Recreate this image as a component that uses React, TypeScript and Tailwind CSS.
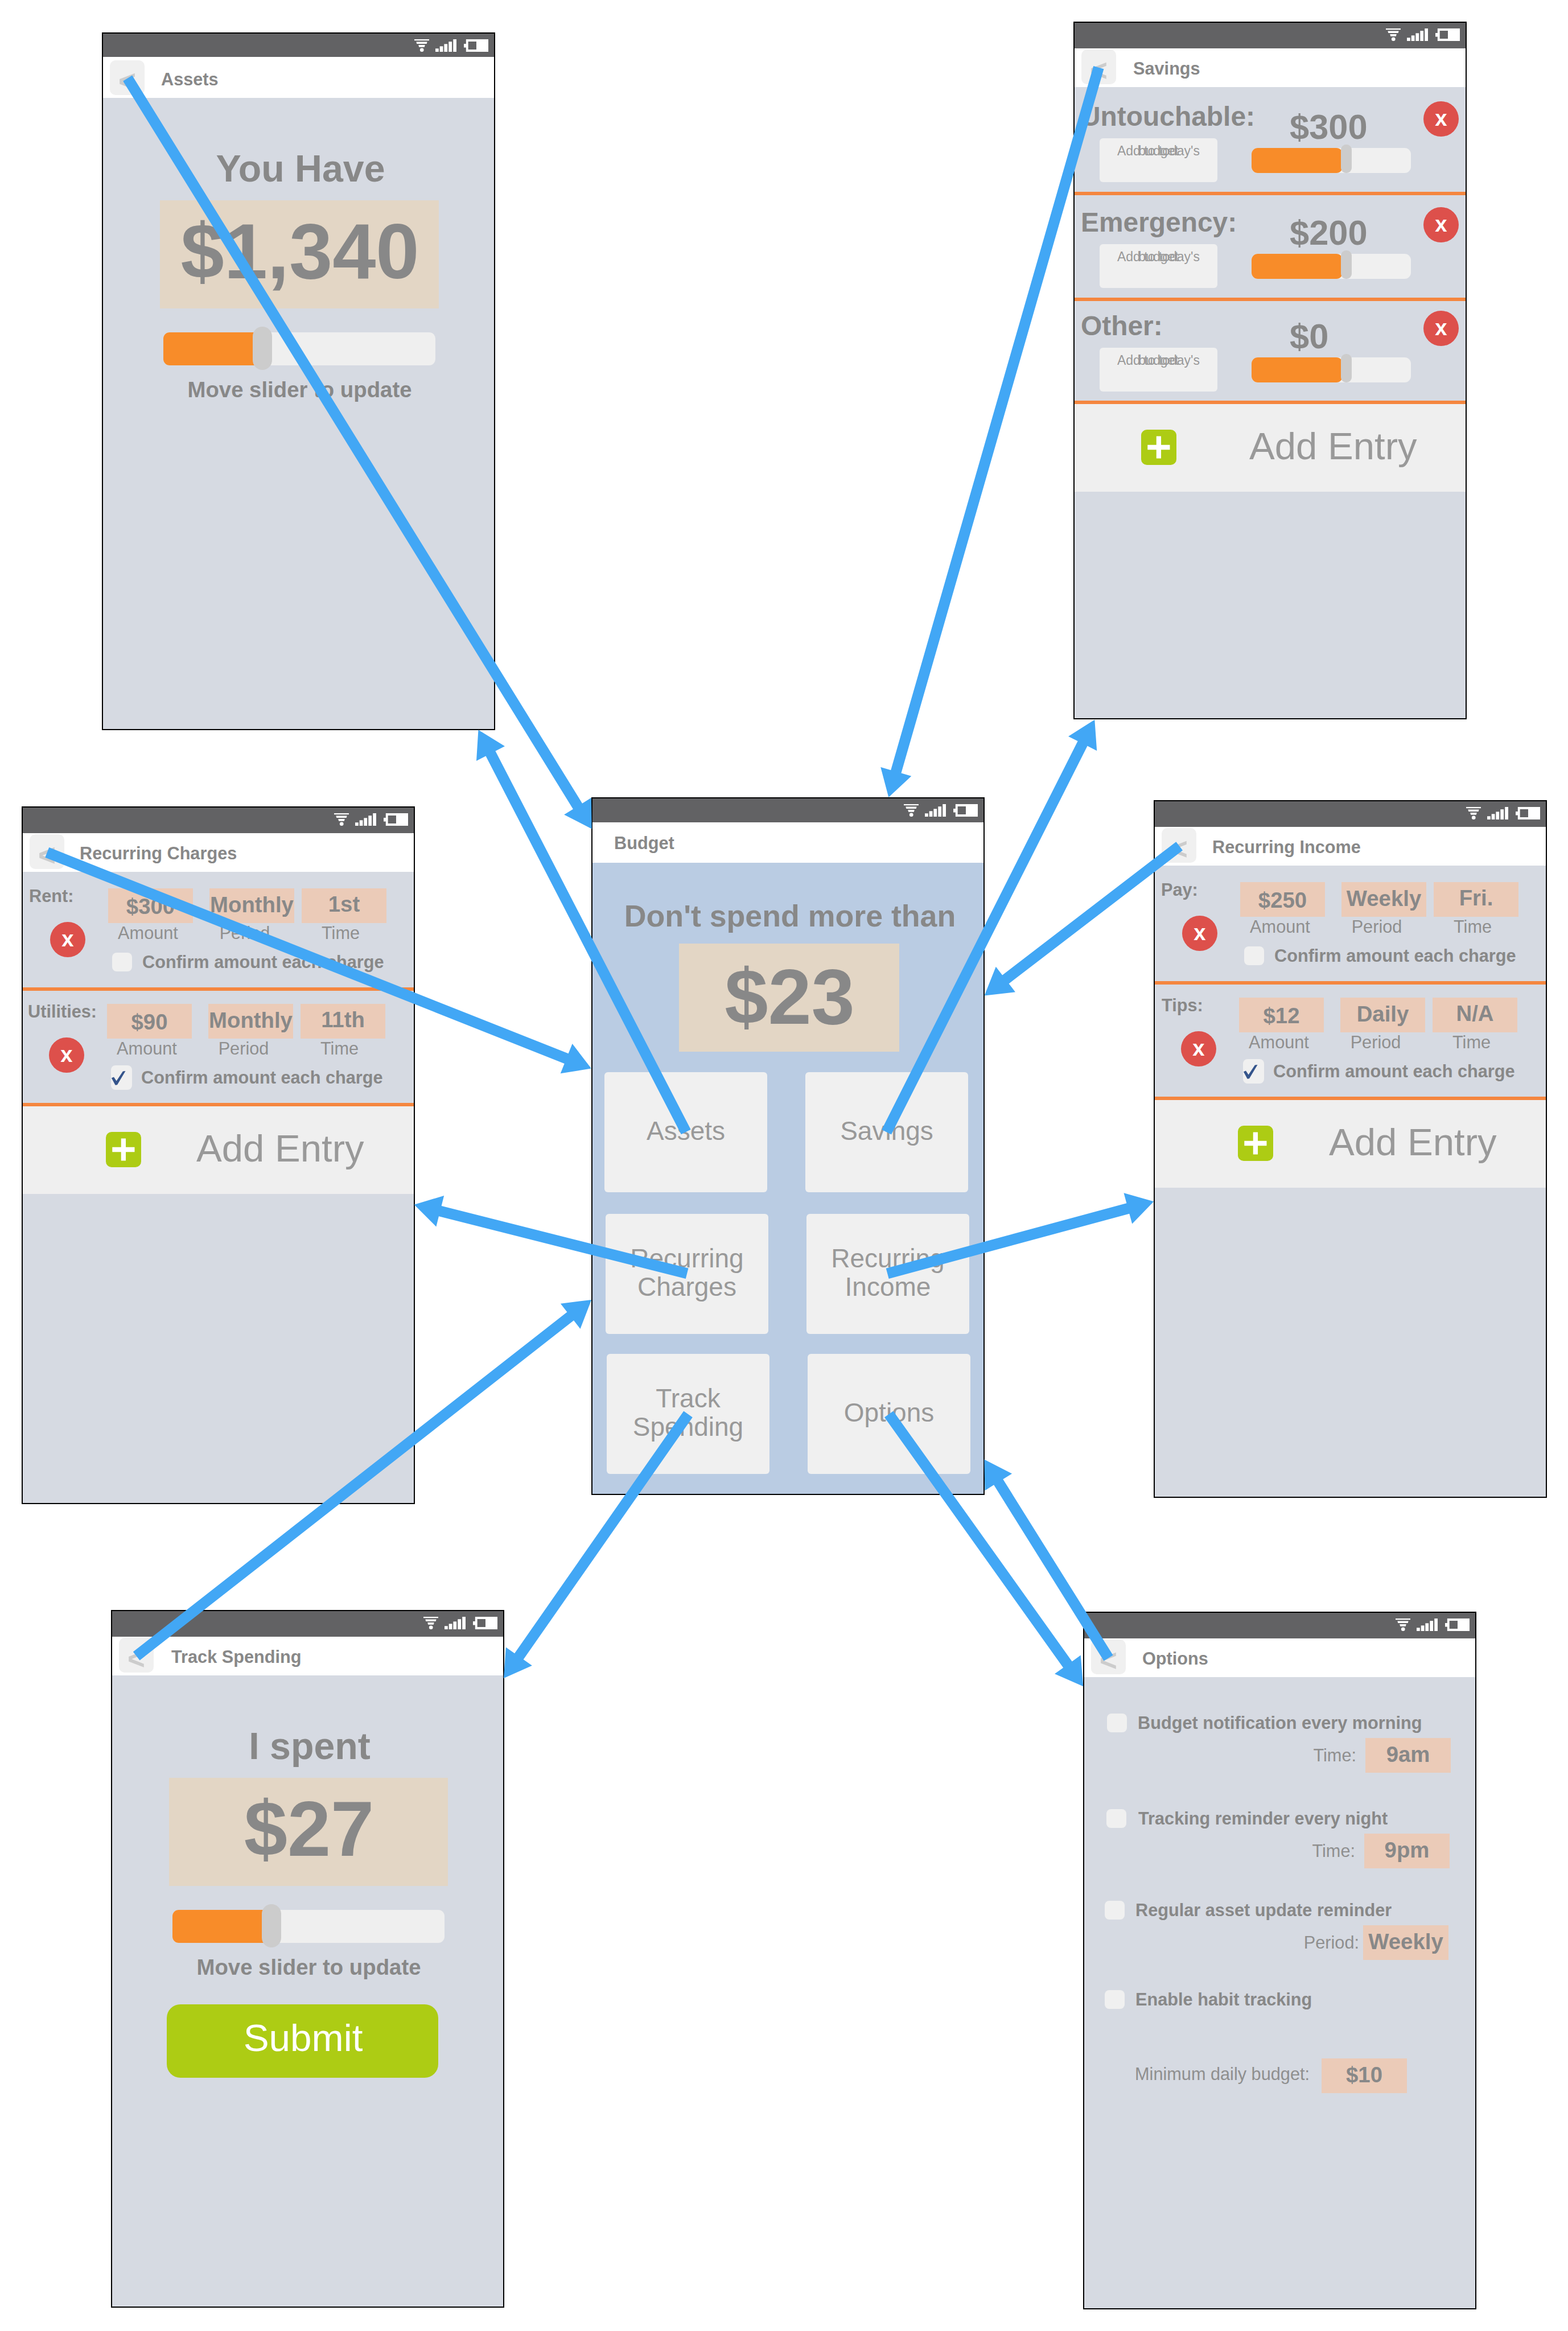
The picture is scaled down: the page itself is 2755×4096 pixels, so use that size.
import type { ReactNode } from 'react'

type Point = [number, number]

const links: { from: Point; to: Point }[] = [
  { from: [345.4, 211.8], to: [1602, 2244.3] },
  { from: [1857.1, 3064.6], to: [1295, 1976] },
  { from: [2974.3, 182.9], to: [2405.7, 2158.7] },
  { from: [2400, 3065], to: [2963.5, 1948.5] },
  { from: [127.5, 2308], to: [1600.7, 2892.8] },
  { from: [1860, 3448], to: [1121.3, 3261.3] },
  { from: [3192.9, 2290.7], to: [2665, 2695.7] },
  { from: [2402.5, 3448], to: [3123.6, 3252.9] },
  { from: [369.3, 4483.7], to: [1601.3, 3519] },
  { from: [1862.9, 3828.7], to: [1363.6, 4543.9] },
  { from: [3000.8, 4489], to: [2664.6, 3951.3] },
  { from: [2406.4, 3828.7], to: [2932.5, 4565.6] },
]

const SHAFT = 14.6
const HEAD_HALF = 43.3
const HEAD_LENGTH = 72.4

function arrowPoints([x1, y1]: Point, [x2, y2]: Point) {
  const length = Math.hypot(x2 - x1, y2 - y1)
  const ux = (x2 - x1) / length
  const uy = (y2 - y1) / length
  const bx = x2 - ux * HEAD_LENGTH
  const by = y2 - uy * HEAD_LENGTH
  const at = (x: number, y: number, d: number) => `${(x - uy * d).toFixed(1)},${(y + ux * d).toFixed(1)}`
  return [
    at(x1, y1, SHAFT),
    at(bx, by, SHAFT),
    at(bx, by, HEAD_HALF),
    `${x2},${y2}`,
    at(bx, by, -HEAD_HALF),
    at(bx, by, -SHAFT),
    at(x1, y1, -SHAFT),
  ].join(' ')
}

function Links() {
  return (
    <svg className="pointer-events-none absolute inset-0 h-full w-full" viewBox="0 0 4245 6311" preserveAspectRatio="none">
      {links.map((l) => (
        <polygon key={l.to.join()} points={arrowPoints(l.from, l.to)} fill="#42a7f5" />
      ))}
    </svg>
  )
}

function StatusIcons() {
  return (
    <>
      <svg className="mr-[11px] h-[22px] w-[26px]" viewBox="0 0 54 50" preserveAspectRatio="none" fill="#fff">
        <rect x="0" y="0" width="54" height="5" />
        <path d="M7 10H47L45 18H9Z" />
        <path d="M15 23H39L37 31H17Z" />
        <ellipse cx="27.5" cy="42.5" rx="7" ry="7.5" />
      </svg>
      <svg className="mr-[13px] h-[22px] w-[37px]" viewBox="0 0 77 50" preserveAspectRatio="none" fill="#fff">
        <rect x="0" y="37" width="12" height="13" />
        <rect x="16" y="28" width="12" height="22" />
        <rect x="32" y="19" width="12" height="31" />
        <rect x="48.5" y="9.5" width="12" height="40.5" />
        <rect x="65" y="0" width="12" height="50" />
      </svg>
      <svg className="h-[22px] w-[43px]" viewBox="0 0 90 50" preserveAspectRatio="none" fill="#fff">
        <path fillRule="evenodd" d="M8 0H90V50H8V33H0V18H8ZM16 9V41H46V9Z" />
      </svg>
    </>
  )
}

interface PhoneProps {
  place: string
  title: string
  titleClass: string
  statusClass?: string
  screenClass?: string
  back?: boolean
  children: ReactNode
}

function Phone({ place, title, titleClass, statusClass = 'h-[47px]', screenClass = 'bg-[#d6dae2]', back = true, children }: PhoneProps) {
  return (
    <section className={`absolute h-[1226px] w-[691px] outline-2 -outline-offset-2 outline-black ${place} ${screenClass}`}>
      <div className="flex h-[115px] flex-col bg-white">
        <div className={`flex items-start justify-end bg-[#626264] pt-[12px] pr-[12px] ${statusClass}`}>
          <StatusIcons />
        </div>
        <div className="flex flex-1 items-end pb-[5px]">
          {back && (
            <button className="-mt-4 ml-[14px] flex h-[61px] w-[61px] items-center justify-center rounded-[10px] bg-[#f0f0f0] pt-[12px] text-[53px] leading-none font-bold text-[#cccccc]">
              &lt;
            </button>
          )}
          <h2 className={`text-[30.7px] font-bold ${titleClass}`}>{title}</h2>
        </div>
      </div>
      {children}
    </section>
  )
}

function AmountPanel({ heading, amount, children }: { heading: string; amount: string; children?: ReactNode }) {
  return (
    <div className="ml-[102px] flex w-[490px] flex-col items-center">
      <h1 className="mt-[84px] pl-[4px] text-[66.3px] leading-[80px] font-bold">{heading}</h1>
      <div className="mt-[16px] flex h-[190px] w-full items-center justify-center bg-[#e3d6c5] pb-[11px] pl-[2px] text-[137px] leading-none font-bold">
        {amount}
      </div>
      <div className="relative mt-[42px] h-[58px] w-[478px] rounded-[11px] bg-[#efefef]">
        <div className="h-full w-[174px] rounded-l-[11px] bg-[#f88c29]" />
        <div className="absolute -top-[10px] left-[157px] h-[76px] w-[34px] rounded-[17px] bg-[#cccccc]" />
      </div>
      <p className="mt-[23px] pl-[1px] text-[38.35px] leading-[40px] font-bold">Move slider to update</p>
      {children}
    </div>
  )
}

function DeleteButton({ className }: { className: string }) {
  return (
    <button
      className={`flex h-[62px] w-[62px] shrink-0 items-center justify-center rounded-full bg-[#dd504b] pb-[2px] text-[38.35px] leading-none font-bold text-white ${className}`}
    >
      x
    </button>
  )
}

function AddEntry({ iconClass, textClass }: { iconClass: string; textClass: string }) {
  return (
    <div className="flex h-[154px] items-start bg-[#efefef]">
      <svg className={`mt-[45px] h-[62px] w-[62px] ${iconClass}`} viewBox="0 0 62 62">
        <rect width="62" height="62" rx="10" fill="#adcc14" />
        <path d="M11.3 31H50.5M30.9 11.4V50.6" stroke="#fff" strokeWidth="8.3" />
      </svg>
      <span className={`mt-[34px] text-[67.1px] leading-[80px] text-[#999999] ${textClass}`}>Add Entry</span>
    </div>
  )
}

function SavingsRow({ name, amount, className }: { name: string; amount: string; className: string }) {
  return (
    <div className={`flex flex-col justify-end border-b-[6px] border-[#f5863f] ${className}`}>
      <div className="flex h-[176px] items-start">
        <div className="ml-[13px] w-[300px]">
          <h3 className="mt-[20px] text-[47.9px] leading-[48px] font-bold">{name}</h3>
          <button className="mt-[14px] ml-[33px] grid h-[77px] w-[207px] justify-items-center rounded-[6px] bg-[#f0f0f0] text-[23px] leading-[44px] text-[#999999]">
            <span className="[grid-area:1/1]">Add to today's</span>
            <span className="[grid-area:1/1]">budget</span>
          </button>
        </div>
        <div className="w-[280px]">
          <div className="mt-[32px] pl-[67px] text-[61.4px] leading-[60px] font-bold">{amount}</div>
          <div className="relative mt-[7px] h-[44px] rounded-[11px] bg-[#f0f0f0]">
            <div className="h-full w-[160px] rounded-[11px] bg-[#f88c29]" />
            <div className="absolute -top-[6px] left-[157px] h-[50px] w-[19px] rounded-[9px] bg-[#cccccc]" />
          </div>
        </div>
        <DeleteButton className="mt-[17px] ml-[22px]" />
      </div>
    </div>
  )
}

interface EntryRowProps {
  name: string
  values: [string, string, string]
  checked?: boolean
  className: string
  padClass: string
  nameClass?: string
}

function Field({ value, label, valueClass, labelClass }: { value: string; label: string; valueClass: string; labelClass: string }) {
  return (
    <div className="flex w-[149px] flex-col items-center">
      <div className={`flex h-[61px] w-full items-center justify-center bg-[#ebcbb8] text-[38.35px] leading-none font-bold ${valueClass}`}>{value}</div>
      <span className={`text-[30.7px] leading-[36px] text-[#8f8f8f] ${labelClass}`}>{label}</span>
    </div>
  )
}

function EntryRow({ name, values, checked, className, padClass, nameClass = '' }: EntryRowProps) {
  return (
    <div className={`flex flex-col justify-end border-b-[6px] border-[#f5863f] ${className}`}>
      <div className={`flex h-[197px] items-start ${padClass}`}>
        <div className="w-[139px]">
          <h3 className={`mt-[18px] text-[30.7px] leading-[37px] font-bold whitespace-nowrap ${nameClass}`}>{name}</h3>
          <DeleteButton className="mt-[27px] ml-[37px]" />
        </div>
        <div className="mt-[23px]">
          <div className="flex">
            <Field value={values[0]} label="Amount" valueClass="pt-[3px]" labelClass="pr-[9px]" />
            <div className="w-[29px]" />
            <Field value={values[1]} label="Period" valueClass="pb-[2px]" labelClass="pr-[25px]" />
            <div className="w-[13px]" />
            <Field value={values[2]} label="Time" valueClass="pb-[4px]" labelClass="pr-[12px]" />
          </div>
          <div className="mt-[11px] flex h-[43px] items-center">
            <div className="ml-[7px] w-[53px]">
              {checked ? (
                <svg className="h-[43px] w-[37px]" viewBox="0 0 37 43">
                  <rect width="37" height="43" rx="8" fill="#f0f0f0" />
                  <path d="M.9 22.3L5 20.4L9.6 27.6L20.9 10.5L25.5 10L11 34.2L7.6 34.8Z" fill="#34548b" />
                </svg>
              ) : (
                <div className="h-[33px] w-[35px] rounded-[8px] bg-[#f0f0f0]" />
              )}
            </div>
            <span className="text-[30.7px] leading-[40px] font-bold whitespace-nowrap">Confirm amount each charge</span>
          </div>
        </div>
      </div>
    </div>
  )
}

function Tile({ children }: { children: ReactNode }) {
  return (
    <button className="flex h-[211px] w-[286px] items-center justify-center rounded-[6px] bg-[#f0f0f0] pb-[6px] text-center text-[46px] leading-[50px] text-[#999999]">
      <span>{children}</span>
    </button>
  )
}

interface OptionProps {
  text: string
  label?: string
  value?: string
  className: string
  gapClass: string
  fieldClass?: string
  labelClass?: string
}

function Option({ text, label, value, className, gapClass, fieldClass, labelClass }: OptionProps) {
  return (
    <div className={className}>
      <div className={`flex h-[33px] items-center ${gapClass}`}>
        <div className="h-[33px] w-[35px] rounded-[8px] bg-[#f0f0f0]" />
        <span className="text-[30.7px] leading-[33px] font-bold whitespace-nowrap">{text}</span>
      </div>
      {label && (
        <div className={`mt-[10px] flex h-[61px] items-center justify-end ${fieldClass}`}>
          <span className={`text-[30.7px] leading-[60px] text-[#8f8f8f] ${labelClass}`}>{label}</span>
          <div className="flex h-[61px] w-[150px] items-center justify-center bg-[#ebcbb8] pb-[3px] text-[38.35px] leading-none font-bold">{value}</div>
        </div>
      )}
    </div>
  )
}

export default function App() {
  return (
    <main className="relative h-[4096px] w-[2755px] overflow-hidden bg-white font-['Liberation_Sans',Arial,sans-serif] text-[#888888]">
      <Phone place="left-[179px] top-[57px]" title="Assets" titleClass="ml-[29px] leading-[54px]" statusClass="h-[43px]">
        <AmountPanel heading="You Have" amount="$1,340" />
      </Phone>

      <Phone place="left-[1886px] top-[38px]" title="Savings" titleClass="ml-[30px] leading-[54px]">
        <SavingsRow name="Untouchable:" amount="$300" className="h-[190px]" />
        <SavingsRow name="Emergency:" amount="$200" className="h-[186px]" />
        <SavingsRow name="Other:" amount="$0" className="h-[181px]" />
        <AddEntry iconClass="ml-[119px]" textClass="ml-[128px]" />
      </Phone>

      <Phone place="left-[38px] top-[1417px]" title="Recurring Charges" titleClass="ml-[27px] leading-[54px]">
        <EntryRow name="Rent:" values={['$300', 'Monthly', '1st']} className="h-[209px]" padClass="pl-[13px]" />
        <EntryRow name="Utilities:" values={['$90', 'Monthly', '11th']} checked className="h-[203px]" padClass="pl-[11px]" />
        <AddEntry iconClass="ml-[148px]" textClass="ml-[97px]" />
      </Phone>

      <Phone
        place="left-[1039px] top-[1401px]"
        title="Budget"
        titleClass="ml-[40px] leading-[58px]"
        statusClass="h-[44px]"
        screenClass="bg-[#bacce3]"
        back={false}
      >
        <div className="flex flex-col">
          <h1 className="mt-[63px] pl-[7px] text-center text-[53.7px] leading-[60px] font-bold">Don't spend more than</h1>
          <div className="mt-[19px] ml-[154px] flex h-[190px] w-[387px] items-center justify-center bg-[#e3d6c5] pb-[4px] pl-[2px] text-[137px] leading-none font-bold">
            $23
          </div>
          <div className="mt-[36px] ml-[23px] flex gap-[67px]">
            <Tile>Assets</Tile>
            <Tile>Savings</Tile>
          </div>
          <div className="mt-[38px] ml-[25px] flex gap-[67px]">
            <Tile>
              Recurring
              <br />
              Charges
            </Tile>
            <Tile>
              Recurring
              <br />
              Income
            </Tile>
          </div>
          <div className="mt-[35px] ml-[27px] flex gap-[67px]">
            <Tile>
              Track
              <br />
              Spending
            </Tile>
            <Tile>Options</Tile>
          </div>
        </div>
      </Phone>

      <Phone place="left-[2027px] top-[1406px]" title="Recurring Income" titleClass="ml-[28px] leading-[54px]">
        <EntryRow name="Pay:" values={['$250', 'Weekly', 'Fri.']} className="h-[209px]" padClass="pl-[13px]" />
        <EntryRow name="Tips:" values={['$12', 'Daily', 'N/A']} checked className="h-[203px]" padClass="pl-[11px]" nameClass="pl-[3px]" />
        <AddEntry iconClass="ml-[148px]" textClass="ml-[98px]" />
      </Phone>

      <Phone place="left-[195px] top-[2829px]" title="Track Spending" titleClass="ml-[31px] leading-[54px]">
        <AmountPanel heading="I spent" amount="$27">
          <button className="mt-[45px] -ml-[4px] flex h-[129px] w-[477px] items-center justify-center self-start rounded-[24px] bg-[#adcc14] pb-[11px] pl-[2px] text-[67.4px] leading-none text-white">
            Submit
          </button>
        </AmountPanel>
      </Phone>

      <Phone place="left-[1903px] top-[2832px]" title="Options" titleClass="ml-[29px] leading-[54px]">
        <div className="flex flex-col">
          <Option
            text="Budget notification every morning"
            label="Time:"
            value="9am"
            className="mt-[64px] ml-[42px]"
            gapClass="gap-[19px]"
            fieldClass="pr-[45px]"
            labelClass="mr-[16px]"
          />
          <Option
            text="Tracking reminder every night"
            label="Time:"
            value="9pm"
            className="mt-[64px] ml-[41px]"
            gapClass="gap-[21px]"
            fieldClass="pr-[47px]"
            labelClass="mr-[16px]"
          />
          <Option
            text="Regular asset update reminder"
            label="Period:"
            value="Weekly"
            className="mt-[57px] ml-[38px]"
            gapClass="gap-[19px]"
            fieldClass="pr-[49px]"
            labelClass="mr-[7px]"
          />
          <Option text="Enable habit tracking" className="mt-[53px] ml-[38px]" gapClass="gap-[19px]" />
          <div className="mt-[87px] ml-[91px] flex items-center gap-[21px]">
            <span className="pb-[5px] text-[30.7px] leading-[56px] text-[#8f8f8f]">Minimum daily budget:</span>
            <div className="flex h-[61px] w-[150px] items-center justify-center bg-[#ebcbb8] pb-[3px] text-[38.35px] leading-none font-bold">$10</div>
          </div>
        </div>
      </Phone>

      <Links />
    </main>
  )
}
